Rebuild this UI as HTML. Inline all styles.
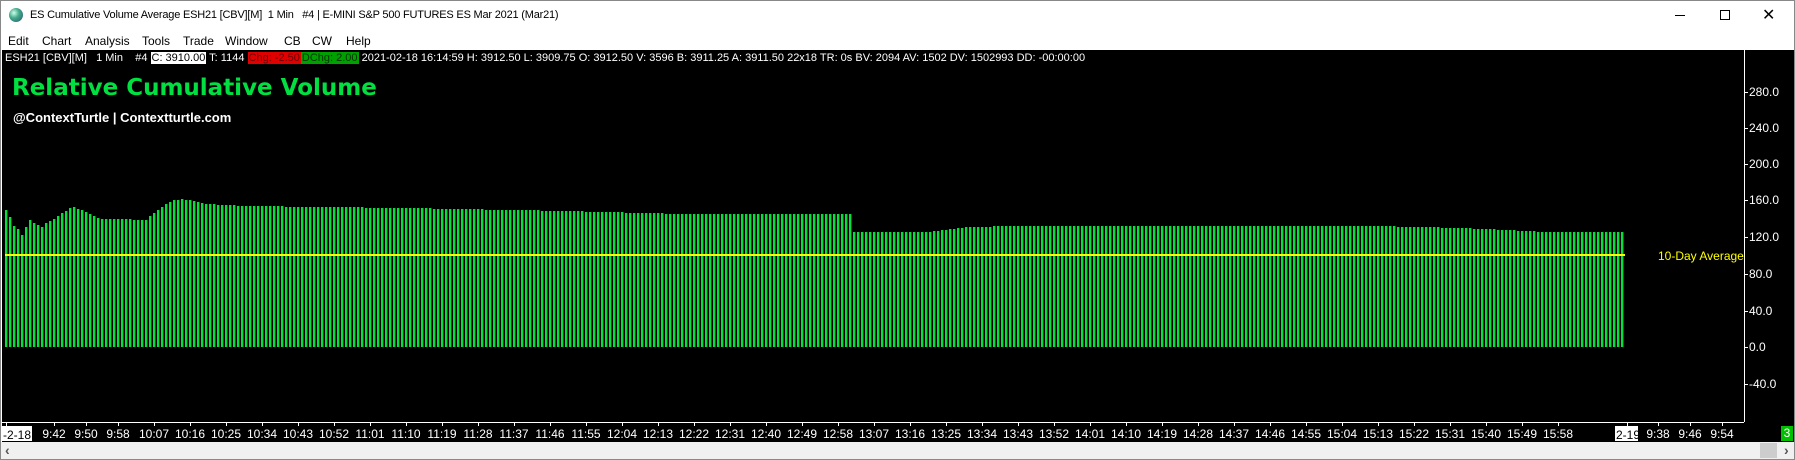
<!DOCTYPE html>
<html><head><meta charset="utf-8"><style>
*{margin:0;padding:0;box-sizing:border-box}
body{width:1795px;height:460px;background:#fff;font-family:"Liberation Sans",sans-serif;position:relative;overflow:hidden}
.a{position:absolute;white-space:nowrap}
#win{position:absolute;left:0;top:0;width:1795px;height:460px;border:1px solid #888}
.menu span{position:absolute;top:34px;font-size:12px;color:#000}
#chart{position:absolute;left:1px;top:50px;width:1793px;height:392px;background:#000}
.info span{font-size:11px;color:#fff}
.yl{position:absolute;left:1749px;font-size:12px;color:#fff;line-height:12px}
.tl{position:absolute;top:428px;font-size:12px;color:#fff;line-height:12px;transform:translateX(-50%)}
</style></head><body>
<div id="win"></div>
<div class="a" style="left:9px;top:8px;width:14px;height:14px;border-radius:50%;background:radial-gradient(circle at 35% 35%,#cfe 0,#4a8 40%,#257 100%)"></div>
<div class="a" style="left:30px;top:8px;font-size:11px;color:#000;line-height:14px;letter-spacing:-0.2px">ES Cumulative Volume Average ESH21 [CBV][M]&nbsp; 1 Min&nbsp;&nbsp; #4 | E-MINI S&amp;P 500 FUTURES ES Mar 2021 (Mar21)</div>
<div class="a" style="left:1675px;top:15px;width:10px;height:1px;background:#000"></div>
<div class="a" style="left:1720px;top:10px;width:10px;height:10px;border:1px solid #000"></div>
<div class="a" style="left:1762px;top:5px;font-size:16px;color:#000">✕</div>
<div class="menu"><span style="left:8px">Edit</span><span style="left:42px">Chart</span><span style="left:85px">Analysis</span><span style="left:142px">Tools</span><span style="left:183px">Trade</span><span style="left:225px">Window</span><span style="left:284px">CB</span><span style="left:312px">CW</span><span style="left:346px">Help</span></div>
<div id="chart"></div>
<div class="a info" style="left:5px;top:51px;line-height:12px"><span>ESH21 [CBV][M]&nbsp;&nbsp; 1 Min&nbsp;&nbsp;&nbsp; #4 </span><span style="background:#fff;color:#000;padding:0 1px">C: 3910.00</span><span> T: 1144 </span><span style="background:#e00000;color:#600;padding:0 1px">Chg: -2.50</span><span style="background:#00a000;color:#030;padding:0 1px">DChg: 2.00</span><span> 2021-02-18 16:14:59 H: 3912.50 L: 3909.75 O: 3912.50 V: 3596 B: 3911.25 A: 3911.50 22x18 TR: 0s BV: 2094 AV: 1502 DV: 1502993 DD: -00:00:00</span></div>
<div class="a" style="left:12px;top:75px;font-size:23px;font-weight:bold;color:#00e040;font-family:'DejaVu Sans',sans-serif">Relative Cumulative Volume</div>
<div class="a" style="left:13px;top:110px;font-size:13px;font-weight:bold;color:#fff">@ContextTurtle | Contextturtle.com</div>
<svg class="a" style="left:0;top:0" width="1795" height="460" id="sv">
<line x1="1744.5" y1="50" x2="1744.5" y2="422" stroke="#fff"/>
<line x1="2" y1="422.5" x2="1744" y2="422.5" stroke="#fff"/>
<line x1="1.5" y1="50" x2="1.5" y2="442" stroke="#fff"/>
</svg>
<div class="a" style="left:1658px;top:249px;font-size:12px;color:#ff0">10-Day Average</div>
<div class="a" style="left:2px;top:426px;width:30px;height:15px;background:#fff"></div>
<div class="a" style="left:3px;top:428px;font-size:12px;color:#000">-2-18</div>
<div class="a" style="left:1615px;top:426px;width:23px;height:15px;background:#fff"></div>
<div class="a" style="left:1616px;top:428px;font-size:12px;color:#000">2-19</div>
<div class="a" style="left:1781px;top:426px;width:12px;height:15px;background:#00c000;color:#fff;font-size:12px;text-align:center;line-height:15px">3</div>
<div class="a" style="left:1px;top:442px;width:1793px;height:17px;background:#f0f0f0"></div>
<div class="a" style="left:5px;top:442px;font-size:14px;color:#555;font-weight:bold">‹</div>
<div class="a" style="left:1760px;top:443px;width:17px;height:15px;background:#cdcdcd"></div>
<div class="a" style="left:1784px;top:442px;font-size:14px;color:#555;font-weight:bold">›</div>
<div id="labels"></div>
<script>
var ns="http://www.w3.org/2000/svg",sv=document.getElementById('sv');
function el(t,a){var e=document.createElementNS(ns,t);for(var k in a)e.setAttribute(k,a[k]);sv.appendChild(e);return e;}
var kp=[[0,210],[1,217],[2,226],[3,229],[4,235],[5,227],[6,220],[7,223],[8,225],[9,227],[10,223],[12,219],[14,213],[16,208],[17,207],[19,210],[21,214],[23,218],[24,219],[28,219],[35,220],[36,216],[38,210],[40,204],[42,200],[44,199],[47,201],[50,204],[60,206],[100,208],[140,211],[160,213],[170,214],[211,214],[212,232],[230,232],[240,227],[252,226],[340,226],[355,227],[370,229],[385,232],[404,232]];
function yt(m){for(var i=0;i<kp.length-1;i++){if(m>=kp[i][0]&&m<=kp[i+1][0]){var t=(m-kp[i][0])/(kp[i+1][0]-kp[i][0]);return kp[i][1]+t*(kp[i+1][1]-kp[i][1]);}}return 232;}
for(var m=0;m<=404;m++){var y=Math.round(yt(m));el('rect',{x:5+4*m,y:y,width:2.4,height:347-y,fill:'#00e040'});}
el('rect',{x:5,y:254,width:1620,height:2,fill:'#ff0'});
var L=document.getElementById('labels');
[[280,92],[240,128],[200,164],[160,200],[120,237],[80,274],[40,311],[0,347],[-40,384]].forEach(function(v){
 el('line',{x1:1744,y1:v[1]+.5,x2:1748,y2:v[1]+.5,stroke:'#fff'});
 var d=document.createElement('div');d.className='yl';d.style.top=(v[1]-6)+'px';d.textContent=v[0].toFixed(1);L.appendChild(d);});
var ts=[];for(var m2=12;m2<=28;m2+=8)ts.push(m2);for(var m3=37;m3<=388;m3+=9)ts.push(m3);
ts.forEach(function(m){var x=6+4*m;el('line',{x1:x+.5,y1:422,x2:x+.5,y2:426,stroke:'#fff'});
 var h=Math.floor((570+m)/60),mi=(570+m)%60;var d=document.createElement('div');d.className='tl';d.style.left=x+'px';d.textContent=h+':'+(mi<10?'0':'')+mi;L.appendChild(d);});
[[1658,'9:38'],[1690,'9:46'],[1722,'9:54']].forEach(function(v){el('line',{x1:v[0]+.5,y1:422,x2:v[0]+.5,y2:426,stroke:'#fff'});var d=document.createElement('div');d.className='tl';d.style.left=v[0]+'px';d.textContent=v[1];L.appendChild(d);});
el('line',{x1:1627.5,y1:422,x2:1627.5,y2:426,stroke:'#fff'});el('line',{x1:6.5,y1:422,x2:6.5,y2:426,stroke:'#fff'});
</script>
</body></html>
